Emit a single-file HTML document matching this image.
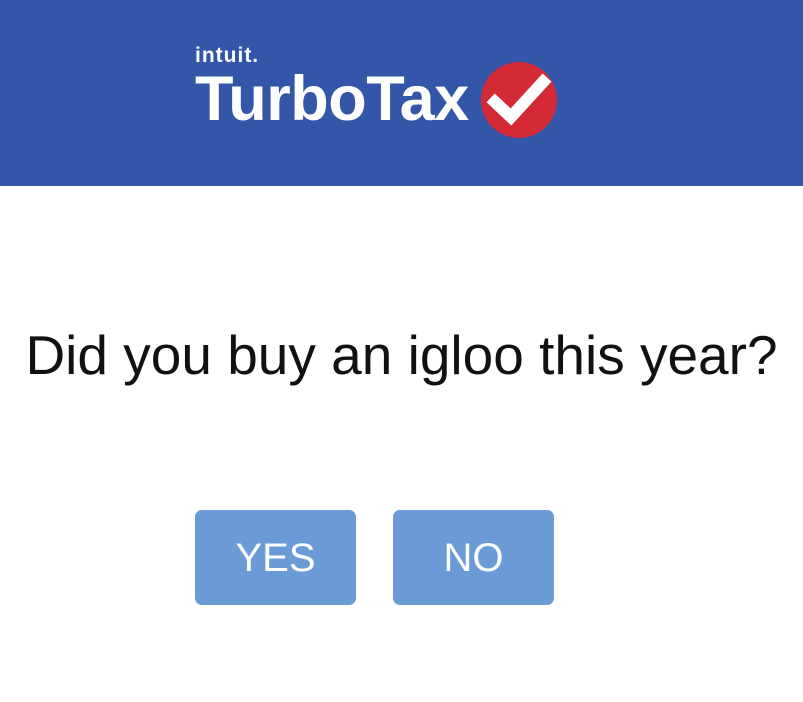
<!DOCTYPE html>
<html><head><style>
html,body{margin:0;padding:0;width:803px;height:702px;background:#fff;overflow:hidden;font-family:"Liberation Sans",sans-serif}
.hdr{position:absolute;left:0;top:0;width:803px;height:186px;background:#3356a8}
.intuit{position:absolute;left:195px;top:44px;color:#fff;font-weight:bold;font-size:21px;letter-spacing:1px}
.tt{position:absolute;left:195px;top:63px;color:#fff;font-weight:bold;font-size:63px;letter-spacing:-0.5px}
.q{position:absolute;left:0;width:803px;top:323px;text-align:center;font-size:55px;color:#111;white-space:nowrap}
.b{position:absolute;top:510px;width:161px;height:95px;background:#6b9bd7;border-radius:7px;color:#fff;font-size:40px;line-height:97px;text-align:center}
</style></head><body>
<div class="hdr">
<div class="intuit">intuit.</div>
<div class="tt">TurboTax</div>
<svg style="position:absolute;left:479px;top:60px" width="80" height="80" viewBox="0 0 80 80">
<circle cx="40" cy="40" r="38" fill="#d42a36"/>
<path d="M16 42 L32 57 L64 22" stroke="#fff" stroke-width="12" fill="none" stroke-linecap="square"/>
</svg>
</div>
<div class="q">Did you buy an igloo this year?</div>
<div class="b" style="left:195px">YES</div>
<div class="b" style="left:393px">NO</div>
</body></html>
